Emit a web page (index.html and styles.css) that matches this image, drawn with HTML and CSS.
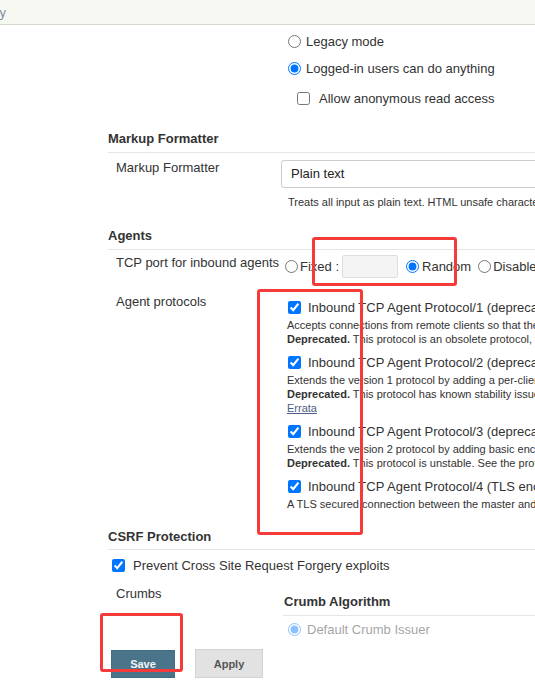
FILE: index.html
```
<!DOCTYPE html>
<html lang="en">
<head>
<meta charset="utf-8">
<title>Configure Global Security</title>
<link rel="stylesheet" href="styles.css">
</head>
<body>
<div class="topbar"><div class="crumb"><span>Configure Global Security</span></div></div>

<main class="config">
  <div class="auth">
    <label class="opt"><input type="radio" name="authz">Legacy mode</label>
    <label class="opt"><input type="radio" name="authz" checked>Logged-in users can do anything</label>
    <label class="opt sub"><input type="checkbox">Allow anonymous read access</label>
  </div>

  <h3 class="section first">Markup Formatter</h3>
  <div class="row">
    <div class="label">Markup Formatter</div>
    <div class="field">
      <div class="select">Plain text</div>
      <div class="desc">Treats all input as plain text. HTML unsafe characters like &lt; and &amp; are escaped to their respective character entities.</div>
    </div>
  </div>

  <h3 class="section agents">Agents</h3>
  <div class="row tcp">
    <div class="label">TCP port for inbound agents</div>
    <div class="field inline">
      <input type="radio" name="port" class="r-fixed"><span>Fixed :</span>
      <span class="port-input"></span>
      <input type="radio" name="port" class="r-random" checked><span>Random</span>
      <input type="radio" name="port" class="r-disable"><span>Disable</span>
    </div>
  </div>

  <div class="row protocols">
    <div class="label">Agent protocols</div>
    <div class="field">
      <div class="proto">
        <label class="proto-title"><input type="checkbox" checked>Inbound TCP Agent Protocol/1 (deprecated, unencrypted)</label>
        <div class="proto-desc">
          <div>Accepts connections from remote clients so that they can be used as additional build agents.</div>
          <div><b>Deprecated.</b> This protocol is an obsolete protocol, which has been replaced by JNLP2-connect. It is also not encrypted.</div>
        </div>
      </div>
      <div class="proto">
        <label class="proto-title"><input type="checkbox" checked>Inbound TCP Agent Protocol/2 (deprecated, unencrypted)</label>
        <div class="proto-desc">
          <div>Extends the version 1 protocol by adding a per-client cookie, so that we can detect a reconnection from the agent and take appropriate actions.</div>
          <div><b>Deprecated.</b> This protocol has known stability issues, and it is replaced by JNLP4. It is also not encrypted. See more information in the protocol</div>
          <div><a href="#" class="link">Errata</a></div>
        </div>
      </div>
      <div class="proto">
        <label class="proto-title"><input type="checkbox" checked>Inbound TCP Agent Protocol/3 (deprecated, basic encryption)</label>
        <div class="proto-desc">
          <div>Extends the version 2 protocol by adding basic encryption but requires a thread per client.</div>
          <div><b>Deprecated.</b> This protocol is unstable. See the protocol documentation for more info.</div>
        </div>
      </div>
      <div class="proto">
        <label class="proto-title"><input type="checkbox" checked>Inbound TCP Agent Protocol/4 (TLS encryption)</label>
        <div class="proto-desc">
          <div>A TLS secured connection between the master and the agent performed by TLS upgrade of the socket.</div>
        </div>
      </div>
    </div>
  </div>

  <h3 class="section csrf">CSRF Protection</h3>
  <label class="csrf-opt"><input type="checkbox" checked>Prevent Cross Site Request Forgery exploits</label>
  <div class="row crumbs">
    <div class="label">Crumbs</div>
    <div class="field">
      <h3 class="subsection">Crumb Algorithm</h3>
      <label class="crumb-opt"><input type="radio" name="crumb" checked>Default Crumb Issuer</label>
    </div>
  </div>
</main>

<div class="bottom-bar">
  <button class="btn save" type="button">Save</button>
  <button class="btn apply" type="button">Apply</button>
</div>

<div class="annot a1"></div>
<div class="annot a2"></div>
<div class="annot a3"></div>
</body>
</html>
```

FILE: styles.css
```
html, body {
  margin: 0;
  padding: 0;
  overflow: hidden;
  height: 100%;
}
body {
  font-family: "Liberation Sans", Arial, sans-serif;
  font-size: 13px;
  color: #333;
  background: #fff;
}
input[type=radio], input[type=checkbox] {
  margin: 0;
  width: 13px;
  height: 13px;
  flex: none;
}

.topbar {
  height: 24px;
  background: #f6f8f1;
  border-bottom: 1px solid #d6d9d0;
  display: flex;
  align-items: center;
}
.crumb {
  width: 6px;
  overflow: hidden;
  display: flex;
  justify-content: flex-end;
  white-space: nowrap;
  color: #7b8ea4;
  font-size: 13px;
}

.config {
  width: 900px;
  padding-left: 108px;
  white-space: nowrap;
}

.auth {
  padding: 7px 0 0 180px;
}
.opt {
  display: flex;
  align-items: center;
  height: 18px;
}
.opt input { margin-right: 5px; }
.opt + .opt { margin-top: 9px; }
.opt.sub { margin-top: 12px; padding-left: 9px; }
.opt.sub input { margin-right: 9px; }

.section {
  margin: 18px 0 0;
  font-size: 13px;
  font-weight: bold;
  line-height: 16px;
  padding-bottom: 5px;
  border-bottom: 1px solid #e5e5e5;
}
.section.first { margin-top: 24px; }
.section.agents { margin-top: 19px; }
.section.csrf { margin-top: 18px; padding-bottom: 4px; }

.row {
  display: grid;
  grid-template-columns: 173px 1fr;
  margin-top: 7px;
}
.label {
  padding-left: 8px;
  line-height: 16px;
}
.select {
  width: 420px;
  height: 26px;
  line-height: 26px;
  border: 1px solid #ccc;
  border-radius: 3px;
  padding-left: 9px;
  color: #222;
}
.desc {
  font-size: 11px;
  line-height: 14px;
  padding-left: 7px;
  margin-top: 7px;
}

.row.tcp { margin-top: 5px; }
.inline {
  display: flex;
  align-items: center;
  height: 23px;
}
.r-fixed { margin-left: 4px !important; margin-right: 2px !important; }
.port-input {
  width: 54px;
  height: 21px;
  margin-left: 3px;
  background: #f4f4f4;
  border: 1px solid #dedede;
  border-radius: 2px;
}
.r-random { margin-left: 8px !important; margin-right: 3px !important; }
.r-disable { margin-left: 7px !important; margin-right: 2px !important; }

.row.protocols { margin-top: 16px; }
.protocols .field { padding-top: 4px; }
.proto + .proto { margin-top: 7px; }
.proto-title {
  display: flex;
  align-items: center;
  height: 18px;
  padding-left: 7px;
}
.proto-title input { margin-right: 7px; }
.proto-desc {
  margin-top: 2px;
  padding-left: 6px;
  font-size: 11px;
  line-height: 14px;
}
.link {
  color: #4d5d85;
  text-decoration: underline;
}

.csrf-opt {
  display: flex;
  align-items: center;
  height: 18px;
  margin-top: 6px;
  padding-left: 4px;
}
.csrf-opt input { margin-right: 8px; }

.row.crumbs { margin-top: 12px; }
.subsection {
  margin: 8px 0 0 2px;
  padding: 0 0 5px 1px;
  font-size: 13px;
  font-weight: bold;
  line-height: 16px;
  border-bottom: 1px solid #e5e5e5;
}
.crumb-opt {
  display: flex;
  align-items: center;
  height: 18px;
  margin-top: 4px;
  padding-left: 7px;
}
.crumb-opt input { margin-right: 6px; }

.bottom-bar {
  position: fixed;
  left: 0;
  right: 0;
  bottom: 0;
  height: 77px;
  background: rgba(255, 255, 255, 0.55);
  display: flex;
  align-items: flex-start;
  gap: 20px;
  padding: 29px 0 0 111px;
  box-sizing: border-box;
}
.btn {
  font-family: "Liberation Sans", Arial, sans-serif;
  font-size: 11px;
  font-weight: bold;
  height: 29px;
  padding: 0;
  border-radius: 0;
  cursor: pointer;
}
.btn.save {
  width: 64px;
  margin-top: 1px;
  height: 28px;
  background: #4a748a;
  border: 1px solid #456d82;
  color: #f2f4f6;
}
.btn.apply {
  width: 68px;
  background: #e2e2e2;
  border: 1px solid #d2d2d2;
  color: #555;
}

.annot {
  position: absolute;
  border: 3px solid #f53a3a;
  border-radius: 3px;
  box-sizing: border-box;
  pointer-events: none;
}
.a1 { left: 312px; top: 237px; width: 145px; height: 49px; }
.a2 { left: 257px; top: 289px; width: 106px; height: 246px; }
.a3 { left: 100px; top: 613px; width: 83px; height: 59px; }
```
